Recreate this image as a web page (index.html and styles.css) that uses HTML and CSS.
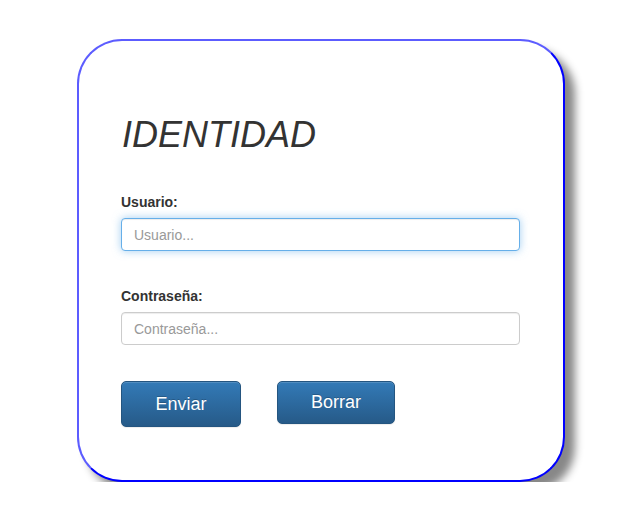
FILE: index.html
```html
<!DOCTYPE html>
<html lang="es">
<head>
<meta charset="utf-8">
<title>Identidad</title>
<link rel="stylesheet" href="styles.css">
</head>
<body>
<form class="card">
  <h1 class="title">IDENTIDAD</h1>
  <div class="group">
    <label class="label" for="usuario">Usuario:</label>
    <input class="field is-focused" id="usuario" type="text" placeholder="Usuario..." autofocus>
  </div>
  <div class="group group-second">
    <label class="label" for="pass">Contraseña:</label>
    <input class="field" id="pass" type="password" placeholder="Contraseña...">
  </div>
  <div class="actions">
    <button class="btn btn-send" type="button">Enviar</button>
    <button class="btn btn-reset" type="button">Borrar</button>
  </div>
</form>
</body>
</html>
```
FILE: styles.css
```css
html, body {
  background: #ffffff;
}
body {
  margin: 8px;
  font-family: "Liberation Sans", Arial, sans-serif;
  font-size: 14px;
  line-height: 20px;
  color: #333333;
}
.card {
  box-sizing: border-box;
  width: 488px;
  margin: 31px auto 0;
  padding: 74px 43px 53px 42px;
  background: #ffffff;
  border-style: solid;
  border-width: 2px;
  border-color: #5c5cff #0000ff #0000ff #5c5cff;
  border-radius: 45px;
  box-shadow: 10px 10px 8px #888888;
}
.title {
  margin: 0 0 37px 1px;
  font-size: 36px;
  line-height: 40px;
  font-style: italic;
  font-weight: normal;
  color: #333333;
}
.group {
  display: flex;
  flex-direction: column;
}
.group-second {
  margin-top: 35px;
}
.label {
  display: block;
  font-weight: bold;
  margin-bottom: 6px;
}
.field {
  box-sizing: border-box;
  width: 100%;
  height: 33px;
  margin: 0;
  padding: 6px 12px;
  font-family: "Liberation Sans", Arial, sans-serif;
  font-size: 14px;
  color: #555555;
  background: #ffffff;
  border: 1px solid #cccccc;
  border-radius: 4px;
  box-shadow: inset 0 1px 1px rgba(0, 0, 0, 0.075);
  outline: none;
}
.field::placeholder {
  color: #999999;
}
.field.is-focused,
.field:focus {
  border-color: #66afe9;
  box-shadow: inset 0 1px 1px rgba(0, 0, 0, 0.075), 0 0 8px rgba(102, 175, 233, 0.6);
}
.field:not(.is-focused):focus {
  border-color: #cccccc;
  box-shadow: inset 0 1px 1px rgba(0, 0, 0, 0.075);
}
.actions {
  display: flex;
  align-items: flex-start;
  gap: 36px;
  margin-top: 36px;
}
.btn {
  box-sizing: border-box;
  margin: 0;
  padding: 0;
  font-family: "Liberation Sans", Arial, sans-serif;
  font-size: 18px;
  color: #ffffff;
  text-shadow: 0 -1px 0 rgba(0, 0, 0, 0.2);
  background-image: linear-gradient(to bottom, #337ab7 0%, #265a88 100%);
  border: 1px solid #245580;
  border-radius: 5px;
  box-shadow: inset 0 1px 0 rgba(255, 255, 255, 0.15), 0 1px 1px rgba(0, 0, 0, 0.075);
  cursor: pointer;
}
.btn-send {
  width: 120px;
  height: 46px;
  padding-top: 1px;
}
.btn-reset {
  width: 118px;
  height: 43px;
}
```
